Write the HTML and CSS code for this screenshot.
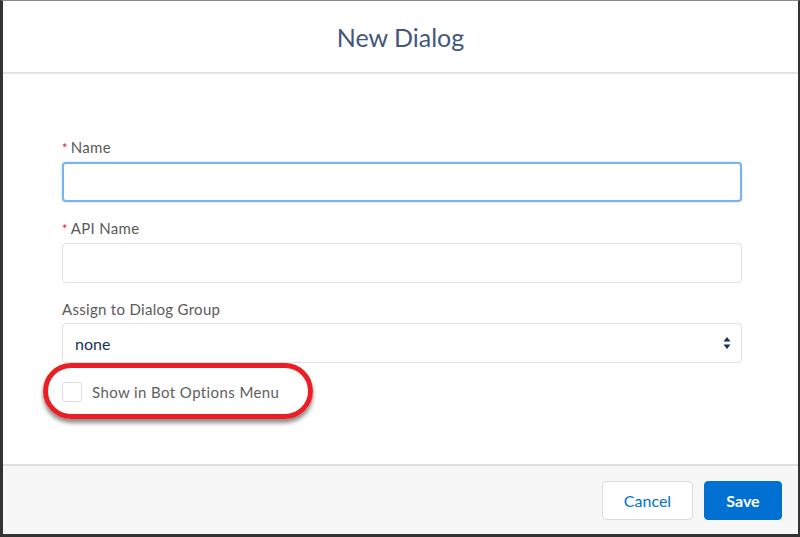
FILE: index.html
```html
<!DOCTYPE html>
<html lang="en">
<head>
    <meta charset="UTF-8">
    <meta name="viewport" content="width=device-width, initial-scale=1.0">
    <title>New Dialog</title>
    <link rel="stylesheet" href="styles.css">
</head>
<body>

    <div class="modal">
        <div class="modal-header">
            <h2>New Dialog</h2>
        </div>

        <div class="modal-body">
            <div class="field">
                <label for="name"><abbr>*</abbr>Name</label>
                <input type="text" id="name" class="focused">
            </div>

            <div class="field">
                <label for="apiName"><abbr>*</abbr>API Name</label>
                <input type="text" id="apiName">
            </div>

            <div class="field">
                <label for="group">Assign to Dialog Group</label>
                <div class="select">
                    <span>none</span>
                    <svg width="8" height="14" viewBox="0 0 8 14">
                        <path d="M4 1 L7.5 5.5 L0.5 5.5 Z" fill="#16325c"/>
                        <path d="M4 13 L7.5 8.5 L0.5 8.5 Z" fill="#16325c"/>
                    </svg>
                </div>
            </div>

            <div class="check-row">
                <span class="checkbox"></span>
                <span>Show in Bot Options Menu</span>
            </div>

            <div class="highlight"></div>
        </div>

        <div class="modal-footer">
            <button class="btn">Cancel</button>
            <button class="btn btn-brand">Save</button>
        </div>
    </div>

</body>
</html>
```

FILE: styles.css
```css
body {
    margin: 0;
    font-family: Lato, "Open Sans", sans-serif;
}

.modal {
    width: 800px;
    height: 537px;
    box-sizing: border-box;
    border-top: 1px solid #8a8a8a;
    border-left: 3px solid #333;
    border-right: 2px solid #333;
    border-bottom: 3px solid #333;
    display: flex;
    flex-direction: column;
    background: #fff;
}

.modal-header {
    height: 71px;
    border-bottom: 2px solid #e2e2e2;
    display: flex;
    align-items: center;
    justify-content: center;
}

.modal-header h2 {
    margin: 0;
    font-size: 25px;
    font-weight: 400;
    color: #44577a;
}

.modal-body {
    position: relative;
    flex: 1;
    padding: 64px 56px 0 59px;
}

.field {
    margin-bottom: 17px;
}

.field label {
    display: block;
    font-size: 15px;
    letter-spacing: 0.3px;
    color: #5a5a5a;
    line-height: 19px;
    margin-bottom: 4px;
}

.field abbr {
    color: #d0212d;
    margin-right: 3px;
    font-size: 13px;
}

.field input,
.select {
    display: block;
    width: 100%;
    height: 40px;
    box-sizing: border-box;
    border: 1px solid #e0e2e6;
    border-radius: 4px;
    background: #fff;
    padding: 0 12px;
    font-family: inherit;
}

.field input.focused {
    border: 2px solid #7bb3f0;
    box-shadow: 0 0 2px #a9cdf5;
}

.select {
    display: flex;
    align-items: center;
    justify-content: space-between;
    font-size: 16px;
    color: #16325c;
    padding-right: 10px;
}

.check-row {
    display: flex;
    align-items: center;
    gap: 10px;
    font-size: 15px;
    letter-spacing: 0.4px;
    color: #606060;
    margin-top: 19px;
}

.checkbox {
    width: 20px;
    height: 20px;
    box-sizing: border-box;
    border: 1px solid #dcdfe4;
    border-radius: 3px;
}

.highlight {
    position: absolute;
    left: 40px;
    top: 289px;
    width: 270px;
    height: 56px;
    box-sizing: border-box;
    border: 5px solid #ea1f26;
    border-radius: 28px;
    box-shadow: 0 4px 4px rgba(0, 0, 0, 0.45);
}

.modal-footer {
    height: 68px;
    border-top: 2px solid #e0e0e0;
    background: #f7f7f7;
    display: flex;
    align-items: center;
    justify-content: flex-end;
    gap: 11px;
    padding: 0 16px 0 0;
}

.btn {
    height: 39px;
    padding: 0 18px;
    border: 1px solid #dddbda;
    border-radius: 4px;
    background: #fff;
    color: #0070d2;
    font-family: inherit;
    font-size: 16px;
    cursor: pointer;
}

.btn:first-child {
    width: 91px;
}

.btn-brand {
    width: 78px;
    background: #0070d2;
    border-color: #0070d2;
    color: #fff;
    font-weight: 700;
}
```
